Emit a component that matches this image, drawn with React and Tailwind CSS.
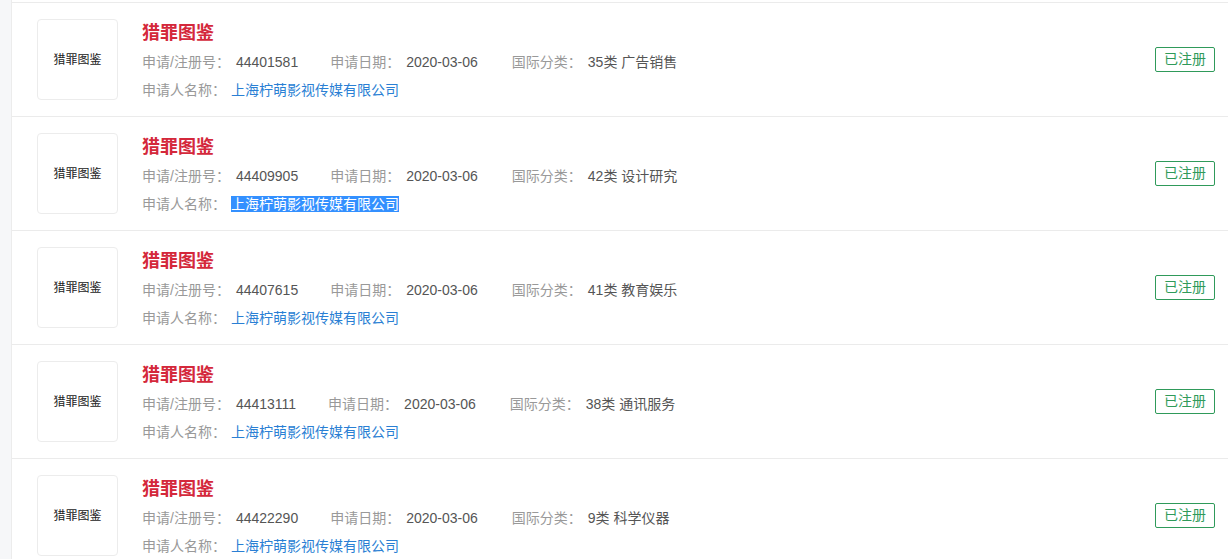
const rows = [
  { no: "44401581", date: "2020-03-06", cls: "35类 广告销售" },
  { no: "44409905", date: "2020-03-06", cls: "42类 设计研究", selected: true },
  { no: "44407615", date: "2020-03-06", cls: "41类 教育娱乐" },
  { no: "44413111", date: "2020-03-06", cls: "38类 通讯服务" },
  { no: "44422290", date: "2020-03-06", cls: "9类 科学仪器" },
];

function Row({ item }) {
  return (
    <div className="flex items-start border-t border-[#ebebeb] pl-[25px] pr-[13px] pt-4 pb-[12px]">
      <div className="flex h-[81px] w-[81px] shrink-0 items-center justify-center rounded-[4px] border border-[#ececec] text-[12px] text-[#222]">
        猎罪图鉴
      </div>
      <div className="ml-[24px] mt-[2px] flex-1">
        <div className="mb-[3px] text-[18px] font-bold leading-[24px] text-[#d4283b]">猎罪图鉴</div>
        <div className="flex text-[14px] leading-[28px]">
          <span className="mr-[32px]">
            <span className="text-[#999]">申请/注册号：</span>
            <span className="ml-[6px] text-[#555]">{item.no}</span>
          </span>
          <span className="mr-[34px]">
            <span className="text-[#999]">申请日期：</span>
            <span className="ml-[6px] text-[#555]">{item.date}</span>
          </span>
          <span>
            <span className="text-[#999]">国际分类：</span>
            <span className="ml-[6px] text-[#555]">{item.cls}</span>
          </span>
        </div>
        <div className="text-[14px] leading-[28px]">
          <span className="text-[#999]">申请人名称：</span>
          <span
            className={
              item.selected
                ? "ml-[5px] bg-[#3390ff] text-white"
                : "ml-[5px] text-[#2a7fd4]"
            }
          >
            上海柠萌影视传媒有限公司
          </span>
        </div>
      </div>
      <div className="mb-[4px] self-center">
        <span className="flex h-[25px] w-[60px] items-center justify-center rounded-[2px] border border-[#2f9a5a] text-[14px] text-[#2f9a5a]">
          已注册
        </span>
      </div>
    </div>
  );
}

export default function App() {
  return (
    <div
      className="flex h-[559px] w-full overflow-hidden bg-[#f6f7f9]"
      style={{ fontFamily: '"Liberation Sans", "Noto Sans CJK SC", sans-serif' }}
    >
      <div className="w-[11px] shrink-0" />
      <div className="flex-1 border-l border-[#ececec] bg-white pt-[2px] pr-[1px]">
        {rows.map((item) => (
          <Row key={item.no} item={item} />
        ))}
      </div>
    </div>
  );
}
